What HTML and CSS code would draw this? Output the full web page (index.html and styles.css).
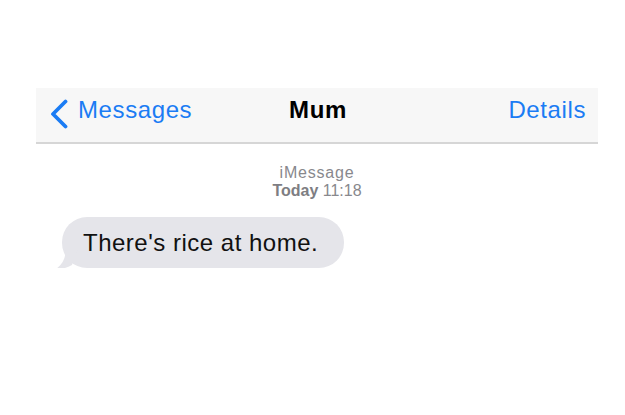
FILE: index.html
```html
<!DOCTYPE html>
<html lang="en">
<head>
  <meta charset="UTF-8">
  <title>Mum</title>
  <link rel="stylesheet" href="styles.css">
</head>
<body>

  <div class="screen">
    <nav class="navbar">
      <a class="back" href="#">
        <svg class="chevron" width="18" height="30" viewBox="0 0 18 30">
          <polyline points="15.5,2.5 3,15 15.5,27.5" fill="none" stroke="#1b7cf4" stroke-width="3.8" stroke-linecap="round" stroke-linejoin="round"/>
        </svg>
        Messages
      </a>
      <span class="title">Mum</span>
      <a class="details" href="#">Details</a>
    </nav>

    <div class="meta">
      <div class="service">iMessage</div>
      <div class="time"><b>Today</b> 11:18</div>
    </div>

    <div class="thread">
      <div class="bubble">
        There's rice at home.
        <svg class="tail" width="24" height="22" viewBox="0 0 24 22">
          <path d="M12 0 C12 10 8 18 0 22 C6 22 12 20 18 17 L24 0 Z" fill="#e5e5ea"/>
        </svg>
      </div>
    </div>
  </div>

</body>
</html>
```

FILE: styles.css
```css
body {
  margin: 0;
  background: #fff;
  font-family: "Liberation Sans", Arial, sans-serif;
}

.screen {
  padding: 88px 27px 0 36px;
}

.navbar {
  display: grid;
  grid-template-columns: 1fr auto 1fr;
  align-items: center;
  height: 54px;
  padding: 0 12px 0 14px;
  background: #f7f7f7;
  border-bottom: 2px solid #d6d6d6;
  font-size: 24px;
  letter-spacing: 0.6px;
}

.navbar a {
  color: #1b7cf4;
  text-decoration: none;
}

.back {
  display: flex;
  align-items: center;
  gap: 10px;
  margin-top: -10px;
}

.chevron {
  display: block;
  margin-top: 7px;
}

.title {
  font-weight: bold;
  color: #000;
  margin-top: -10px;
}

.details {
  justify-self: end;
  margin-top: -10px;
}

.meta {
  margin-top: 20px;
  text-align: center;
  font-size: 16px;
  line-height: 18px;
  color: #88888d;
}

.service {
  letter-spacing: 0.8px;
}

.time b {
  color: #7e7e83;
}

.thread {
  padding: 17px 0 0 26px;
}

.bubble {
  position: relative;
  display: inline-block;
  height: 51px;
  line-height: 51px;
  padding: 0 26px 0 21px;
  border-radius: 25px;
  background: #e5e5ea;
  color: #111;
  font-size: 24px;
  letter-spacing: 0.5px;
}

.tail {
  position: absolute;
  left: -8px;
  bottom: -2px;
}
```
